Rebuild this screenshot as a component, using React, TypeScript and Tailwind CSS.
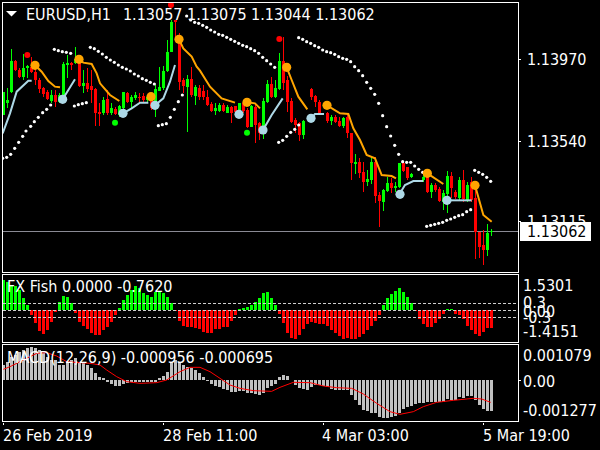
const C: (string | number)[][] = [
["g",276,276,345,345],["g",265,300,310,325],["g",148,183,275,280],["r",180,183,210,212],["r",205,210,232,235],["g",163,205,232,240],["g",195,198,205,235],["r",170,200,216,220],["r",200,215,240,255],["r",235,240,268,280],
["r",262,265,282,290],["r",270,275,297,300],["g",270,285,303,310],["r",270,285,305,320],["g",280,285,305,310],["g",185,192,287,310],["g",165,188,195,235],["r",185,188,195,210],["g",140,178,190,192],["r",180,190,258,260],
["g",210,250,258,280],["r",205,250,268,275],["r",210,258,270,310],["r",265,268,340,378],["r",310,335,342,378],["g",290,300,340,345],["r",270,298,340,345],["g",310,325,340,345],["r",320,328,342,345],["g",315,318,345,350],
["g",276,276,325,330],["r",276,280,307,310],["g",285,292,305,325],["g",275,285,295,300],["r",280,290,295,305],["r",280,288,300,305],["g",285,290,300,305],["r",280,300,325,330],["g",255,268,320,350],["g",200,262,272,272],
["g",198,212,265,270],["g",120,155,212,215],["g",60,65,155,155],["r",60,60,66,120],["r",100,120,245,270],["r",235,240,258,280],["g",225,238,262,395],["r",200,238,285,290],["g",255,262,288,315],["r",255,265,290,300],
["r",255,272,292,300],["r",270,290,315,318],["r",305,312,333,335],["g",310,325,333,345],["g",310,315,332,335],["r",310,315,332,335],["g",315,320,338,340],["r",318,322,340,368],["r",318,318,335,338],["g",308,310,335,338],
["r",305,310,332,340],["r",325,330,380,385],["g",315,318,380,382],["r",315,320,375,428],["r",365,370,400,420],["g",293,303,382,417],["g",240,252,305,310],["r",230,252,290,295],["g",240,265,290,295],["g",160,183,268,270],
["r",112,183,248,270],["r",228,240,305,335],["r",295,303,365,370],["r",355,360,375,400],["r",365,370,405,423],["g",360,362,405,417],["n",0,0,0,0],["r",265,268,290,300],["r",285,288,307,320],["r",300,305,340,345],
["n",0,0,0,0],["r",335,340,363,370],["g",345,350,363,375],["r",345,350,365,370],["r",350,362,378,382],["g",352,355,378,385],["r",342,350,400,415],["r",398,400,490,540],["g",462,485,492,522],["r",475,485,520,535],
["r",485,515,545,575],["g",510,537,545,557],["g",470,485,540,552],["r",470,485,587,608],["r",575,585,602,680],["g",568,570,605,633],["g",530,548,573,575],["r",535,550,565,580],["g",545,558,565,575],["g",488,488,560,565],
["r",490,490,512,515],["r",502,502,535,540],["g",520,522,530,535],["n",0,0,0,0],["n",0,0,0,0],["g",525,530,540,545],["r",520,530,577,580],["g",550,555,575,593],["r",550,555,570,575],["r",560,567,602,605],
["g",570,580,605,630],["g",513,528,582,640],["r",515,528,565,595],["r",570,575,590,598],["g",530,540,595,600],["r",510,540,598,605],["g",545,555,600,605],["r",530,545,600,605],["r",565,595,695,778],["r",695,695,740,775],
["r",690,735,750,795],["g",673,700,750,768],["g",687,692,696,708],
];

const FISH = [30,28,25,24,20,12,5,-5,-13,-21,-24,-20,-12,-2,8,14,13,7,-3,-12,-16,-19,-23,-25,-25,-20,-17,-12,-5,2,10,15,20,24,22,17,15,13,18,18,17,13,7,-1,-11,-16,-17,-17,-18,-19,
-22,-23,-23,-19,-19,-17,-17,-11,-5,1,2,3,5,8,12,17,18,12,5,-4,-13,-23,-28,-29,-25,-19,-14,-12,-13,-14,-14,-16,-20,-23,-26,-29,-28,-29,-29,-27,-24,-20,-16,-11,-5,5,12,16,19,22,
18,13,7,-1,-9,-14,-17,-17,-13,-9,-4,1,1,-4,-5,-9,-16,-20,-24,-26,-22,-18,-18];

const MACD = [15,18,23,25,28,30,32,33,32,30,27,23,20,20,15,15,18,20,22,18,18,15,12,7,3,2,-2,-4,-6,-6,-4,-3,-2,-2,-2,-2,-2,-2,-2,2,4,8,17,20,18,15,13,12,10,7,
3,-1,-4,-6,-7,-9,-10,-12,-12,-11,-11,-13,-13,-14,-15,-13,-8,-6,-4,3,5,4,0,-5,-8,-9,-10,-7,-5,-5,-6,-7,-9,-10,-10,-10,-10,-15,-20,-25,-30,-31,-33,-33,-37,-38,-38,-37,-36,-33,
-29,-27,-26,-24,-23,-23,-22,-22,-22,-22,-22,-19,-20,-20,-17,-18,-16,-16,-20,-25,-29,-31,-31];

const P = (a: number[]) => {
  const out: string[] = [];
  for (let i = 0; i < a.length; i += 2) out.push(`${a[i] / 3},${a[i + 1] / 3}`);
  return out.join(" ");
};

const ORANGE = [
  P([105,196,125,215,145,243,165,260,180,262]),
  P([237,178,250,188,275,192,290,220,300,250,330,285,358,303]),
  P([537,118,550,145,575,170,590,200,600,212,630,260,665,295,705,308]),
  P([741,307,765,310,780,325]),
  P([860,202,875,240,895,290,922,328]),
  P([981,316,1020,340,1045,342,1060,385,1080,420,1100,465,1125,475,1145,525,1175,528,1188,535]),
  P([1282,520,1330,552]),
  P([1425,556,1450,645,1475,665]),
];
const BLUE = [
  P([8,400,30,340,50,275,85,242,95,242]),
  P([188,298,205,270,225,238]),
  P([369,340,395,325,420,308,445,308]),
  P([465,316,490,295,510,245,525,195]),
  P([789,390,815,345,848,295]),
  P([933,355,945,342,972,342]),
  P([1200,580,1215,555,1240,543,1270,543]),
  P([1341,601,1415,601]),
];
const DOTS = [
  8,475,20,472,32,463,44,445,56,427,68,409,78,393,92,379,103,365,115,352,128,338,140,328,152,315,
  163,148,175,152,187,155,199,157,212,160,
  223,318,235,314,247,311,259,308,
  271,142,283,146,295,154,307,162,319,172,331,180,343,187,355,195,367,202,379,207,391,213,403,222,415,228,427,236,439,241,451,247,463,252,
  475,377,487,374,499,371,511,352,523,328,535,305,547,285,
  560,48,572,60,584,67,596,70,608,76,620,82,632,90,644,96,656,103,668,106,680,112,692,118,704,124,716,130,728,136,740,140,752,146,764,152,776,160,788,172,800,182,812,192,824,202,
  836,427,848,421,860,409,872,397,884,388,896,375,
  896,113,908,118,920,125,932,130,944,137,956,142,968,150,980,155,992,158,1004,163,1016,170,1028,175,1040,178,1052,185,1064,200,1076,212,1088,227,1100,247,1112,265,1124,283,1136,310,1148,347,1160,380,1172,408,1184,436,1196,463,
  1208,485,1220,487,1232,487,1244,498,1256,508,1268,517,
  1280,679,1292,676,1304,673,1316,670,1328,667,1340,661,1352,657,1364,652,1376,647,1388,644,1400,635,1412,629,
  1424,511,1436,517,1448,523,1460,532,1472,544,
];
const BALLS_O = [[105,196],[237,178],[453,290],[537,118],[741,307],[860,202],[981,316],[1282,520],[1425,556]];
const BALLS_B = [[188,298],[369,340],[465,316],[717,343],[789,390],[933,355],[1200,583],[1341,601]];
const SMALL = [[82,165,"#ff0000"],[513,15,"#ff0000"],[838,117,"#ff0000"],[345,368,"#00ff00"],[741,398,"#00ff00"]] as [number, number, string][];
const SIGNAL = P([10,1108,30,1100,60,1085,90,1070,110,1060,140,1058,170,1068,200,1085,240,1088,270,1090,300,1095,320,1110,350,1130,380,1145,420,1150,470,1148,500,1140,540,1115,570,1102,600,1102,630,1115,660,1135,690,1155,720,1165,760,1172,815,1174,840,1162,880,1147,930,1148,970,1158,1010,1163,1055,1165,1090,1182,1130,1210,1170,1235,1200,1243,1240,1235,1270,1220,1310,1207,1360,1201,1420,1195,1445,1197,1472,1207]);

const Dashed = ({ y }: { y: number }) => (
  <line x1="3" x2="518" y1={y} y2={y} stroke="#cfcfcf" strokeWidth="1" strokeDasharray="3 2" shapeRendering="crispEdges" />
);

export default function App() {
  const legend = "absolute text-white whitespace-nowrap";
  const tick = "w-[2px] h-px bg-white shrink-0";
  const row = "flex items-start whitespace-nowrap";
  return (
    <div className="w-[600px] h-[450px] bg-black overflow-hidden pt-[2px] pl-[2px] flex flex-col gap-px text-white text-[16px] leading-4 font-['DejaVu_Sans_Condensed','DejaVu_Sans',sans-serif]">
      {/* Price pane */}
      <div className="flex h-[271px]">
        <div className="relative w-[517px] h-full border border-white overflow-hidden">
          <svg width="515" height="269" viewBox="3 3 515 269" className="block">
            <line x1="3" x2="518" y1="231.5" y2="231.5" stroke="#8a8a94" strokeWidth="1" />
            <g shapeRendering="crispEdges">
              {C.map((c, i) => {
                if (c[0] === "n") return null;
                const col = c[0] === "g" ? "#00ff00" : "#ff0000";
                const [wt, bt, bb, wb] = (c.slice(1) as number[]).map((v) => Math.round(v / 3));
                return (
                  <g key={i} fill={col}>
                    <rect x={3 + 4 * i} y={wt} width="1" height={Math.max(wb - wt, 1)} />
                    <rect x={2 + 4 * i} y={bt} width="3" height={Math.max(bb - bt, 1)} />
                  </g>
                );
              })}
            </g>
            {ORANGE.map((p, i) => (
              <polyline key={i} points={p} fill="none" stroke="#ffa500" strokeWidth="2" />
            ))}
            {BLUE.map((p, i) => (
              <polyline key={i} points={p} fill="none" stroke="#add8e6" strokeWidth="2" />
            ))}
            {Array.from({ length: DOTS.length / 2 }, (_, i) => (
              <circle key={i} cx={DOTS[2 * i] / 3} cy={DOTS[2 * i + 1] / 3} r="1.6" fill="#ffffff" />
            ))}
            {BALLS_O.map(([x, y], i) => (
              <circle key={i} cx={x / 3} cy={y / 3} r="4.6" fill="#ffa500" />
            ))}
            {BALLS_B.map(([x, y], i) => (
              <circle key={i} cx={x / 3} cy={y / 3} r="4.6" fill="#add8e6" />
            ))}
            {SMALL.map(([x, y, f], i) => (
              <circle key={i} cx={x / 3} cy={y / 3} r="3" fill={f} />
            ))}
            <polygon points="6,11 17,11 11.5,16.5" fill="#ffffff" />
          </svg>
          <div className={`${legend} left-[23px] top-[4px] flex gap-[12px]`}>
            <span>EURUSD,H1</span>
            <span>1.13057 1.13075 1.13044 1.13062</span>
          </div>
        </div>
        <div className="relative flex-1 flex flex-col pt-[50px]">
          <div className={`${row} h-[82px]`}>
            <div className={`${tick} mt-[7px]`} />
            <span className="ml-[6px]">1.13970</span>
          </div>
          <div className={`${row} h-[80px]`}>
            <div className={`${tick} mt-[7px]`} />
            <span className="ml-[6px]">1.13540</span>
          </div>
          <div className={row}>
            <div className={`${tick} mt-[7px]`} />
            <span className="ml-[6px]">1.13115</span>
          </div>
          <div className="absolute left-[1px] top-[220px] w-[71px] h-[19px] bg-white flex items-center pl-[7px] text-black">
            1.13062
          </div>
        </div>
      </div>

      {/* FX Fish pane */}
      <div className="flex h-[69px]">
        <div className="relative w-[517px] h-full border border-white overflow-hidden">
          <svg width="515" height="67" viewBox="3 275 515 67" className="block">
            <g shapeRendering="crispEdges">
              {FISH.map((v, i) => (
                <rect key={i} x={2 + 4 * i} y={v > 0 ? 310 - v : 310} width="3" height={Math.abs(v)} fill={v > 0 ? "#00ff00" : "#ff0000"} />
              ))}
            </g>
            <Dashed y={303.5} />
            <Dashed y={310.5} />
            <Dashed y={317.5} />
          </svg>
          <span className={`${legend} left-[4px] top-[4px]`}>FX Fish 0.0000 -0.7620</span>
        </div>
        <div className="flex-1 flex flex-col pt-[4px] pl-[4px]">
          <div className={`${row} h-[17px]`}>1.5301</div>
          <div className={`${row} h-[9px]`}>0.3</div>
          <div className={`${row} h-[6px]`}>0.00</div>
          <div className={`${row} h-[14px]`}>-0.3</div>
          <div className={row}>-1.4151</div>
        </div>
      </div>

      {/* MACD pane */}
      <div className="flex h-[78px]">
        <div className="relative w-[517px] h-full border border-white overflow-hidden">
          <svg width="515" height="76" viewBox="3 345 515 76" className="block">
            <g shapeRendering="crispEdges">
              {MACD.map((v, i) => (
                <rect key={i} x={2 + 4 * i} y={v > 0 ? 380 - v : 380} width="3" height={Math.abs(v)} fill="#c0c0c0" />
              ))}
            </g>
            <polyline points={SIGNAL} fill="none" stroke="#ff0000" strokeWidth="1" />
          </svg>
          <span className={`${legend} left-[4px] top-[5px]`}>MACD(12,26,9) -0.000956 -0.000695</span>
        </div>
        <div className="flex-1 flex flex-col pt-[4px]">
          <div className={`${row} h-[26px] pl-[4px]`}>0.001079</div>
          <div className={`${row} h-[29px]`}>
            <div className={`${tick} mt-[6px]`} />
            <span className="ml-[2px]">0.00</span>
          </div>
          <div className={`${row} pl-[4px]`}>-0.001277</div>
        </div>
      </div>

      {/* Time axis */}
      <div className="flex-1 flex pl-px">
        <div className="w-[160px] flex flex-col">
          <div className="w-px h-[2px] bg-white" />
          <span className="pt-[3px] whitespace-nowrap">26 Feb 2019</span>
        </div>
        <div className="w-[160px] flex flex-col">
          <div className="w-px h-[2px] bg-white" />
          <span className="pt-[3px] whitespace-nowrap">28 Feb 11:00</span>
        </div>
        <div className="w-[160px] flex flex-col">
          <div className="w-px h-[2px] bg-white" />
          <span className="pt-[3px] -ml-px whitespace-nowrap">4 Mar 03:00</span>
        </div>
        <div className="w-[100px] flex flex-col">
          <div className="w-px h-[2px] bg-white" />
          <span className="pt-[3px] whitespace-nowrap">5 Mar 19:00</span>
        </div>
      </div>
    </div>
  );
}
